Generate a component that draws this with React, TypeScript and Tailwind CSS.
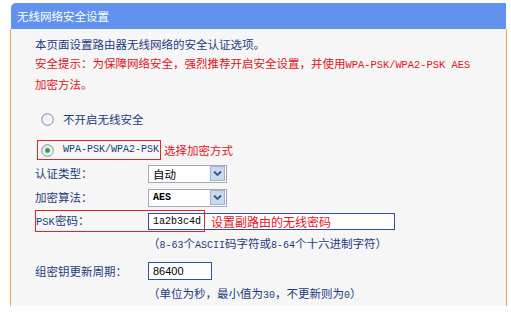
import React from "react";

const MONO = "font-['Liberation_Mono',monospace] text-[10px]";

function Radio({ checked }: { checked?: boolean }) {
  return (
    <svg width="13" height="13" viewBox="0 0 13 13" className="shrink-0">
      <defs>
        <linearGradient id={checked ? "rg1" : "rg0"} x1="0" y1="0" x2="1" y2="1">
          <stop offset="0" stopColor="#e2e6ec" />
          <stop offset="1" stopColor="#ffffff" />
        </linearGradient>
      </defs>
      <circle cx="6.5" cy="6.5" r="5.8" fill={`url(#${checked ? "rg1" : "rg0"})`} stroke="#7d8ba0" strokeWidth="1" />
      {checked && (
        <>
          <circle cx="6.5" cy="6.5" r="3.2" fill="#bfe3c4" />
          <circle cx="6.5" cy="6.5" r="2.2" fill="#2f9a47" />
        </>
      )}
    </svg>
  );
}

function Select({ value, mono }: { value: string; mono?: boolean }) {
  return (
    <div className="w-[79px] h-[18px] border border-[#a3aab4] bg-white flex items-center">
      <div className={"flex-1 pl-[4px] text-black leading-[16px] " + (mono ? "font-['Liberation_Mono',monospace] text-[10px] font-bold" : "")}>
        {value}
      </div>
      <div className="w-[15px] h-[15px] mr-[1px] bg-[#cbd9ef] border border-[#a2b2cd] flex items-center justify-center">
        <svg width="9" height="7" viewBox="0 0 9 7">
          <path d="M1 1.5 L4.5 5 L8 1.5" fill="none" stroke="#3d5686" strokeWidth="1.8" />
        </svg>
      </div>
    </div>
  );
}

export default function App() {
  return (
    <div className="w-[511px] h-[315px] bg-white overflow-hidden font-['Noto_Sans_CJK_SC',sans-serif] text-[11.5px]">
      <div className="ml-[10px] pt-[3px] w-[497px]">
        <div className="mx-[1px] h-[26px] bg-[#6092ee] rounded-tl-[5px] pl-[6px] leading-[26px] text-white">
          无线网络安全设置
        </div>
        <div className="h-[277px] bg-[#f6f6f6] border-l border-r border-[#f2a760] pl-[24px] pt-[6px]">
          <div className="leading-[19px] text-[#1d3b80]">本页面设置路由器无线网络的安全认证选项。</div>
          <div className="leading-[19px] text-[#e3141c] whitespace-nowrap">
            安全提示：为保障网络安全，强烈推荐开启安全设置，并使用<span className="font-['Liberation_Mono',monospace] text-[10.4px]">WPA-PSK/WPA2-PSK AES</span>
          </div>
          <div className="leading-[19px] text-[#e3141c]">加密方法。</div>

          <div className="mt-[15px] h-[20px] flex items-center pl-[6px] gap-[9px] text-[#1d3b80]">
            <Radio />
            <span className="leading-[20px]">不开启无线安全</span>
          </div>

          <div className="mt-[11px] h-[20px] flex items-center">
            <div className="ml-[2px] h-[20px] border border-[#e0252d] pl-[3px] pr-[1px] flex items-center gap-[9px]">
              <Radio checked />
              <span className={MONO + " text-[#1d3b80] leading-[18px]"}>WPA-PSK/WPA2-PSK</span>
            </div>
            <span className="ml-[3px] text-[#e3141c] leading-[20px]">选择加密方式</span>
          </div>

          <div className="mt-[4px] h-[19px] flex items-center text-[#1d3b80]">
            <div className="w-[113px] leading-[19px]">认证类型：</div>
            <Select value="自动" />
          </div>

          <div className="mt-[5px] h-[19px] flex items-center text-[#1d3b80]">
            <div className="w-[113px] leading-[19px]">加密算法：</div>
            <Select value="AES" mono />
          </div>

          <div className="mt-[3px] h-[22px] flex items-center text-[#1d3b80] relative">
            <div className="w-[113px] pl-[1px] leading-[20px]">
              <span className="font-['Liberation_Mono',monospace] text-[10.5px]">PSK</span>密码：
            </div>
            <div className="w-[247px] h-[17px] border border-[#2f4f9c] bg-white flex items-center pl-[4px]">
              <span className={MONO + " text-black leading-[15px]"}>1a2b3c4d</span>
              <span className="ml-[10px] text-[#e3141c] leading-[15px] text-[12px]">设置副路由的无线密码</span>
            </div>
            <div className="absolute left-0 top-0 w-[170px] h-[22px] border border-[#e0252d] pointer-events-none" />
          </div>

          <div className="mt-[2px] pl-[113px] leading-[18px] text-[#1d3b80] whitespace-nowrap">
            （<span className={MONO}>8-63</span>个<span className={MONO}>ASCII</span>码字符或<span className={MONO}>8-64</span>个十六进制字符）
          </div>

          <div className="mt-[7px] h-[18px] flex items-center text-[#1d3b80]">
            <div className="w-[113px] leading-[18px]">组密钥更新周期：</div>
            <div className="w-[64px] h-[18px] border border-[#2f4f9c] bg-white flex items-center pl-[4px]">
              <span className="font-['Liberation_Sans',sans-serif] text-[11px] text-black leading-[16px]">86400</span>
            </div>
          </div>

          <div className="mt-[4px] pl-[113px] leading-[18px] text-[#1d3b80] whitespace-nowrap">
            （单位为秒，最小值为<span className={MONO}>30</span>，不更新则为<span className={MONO}>0</span>）
          </div>
        </div>
      </div>
    </div>
  );
}
